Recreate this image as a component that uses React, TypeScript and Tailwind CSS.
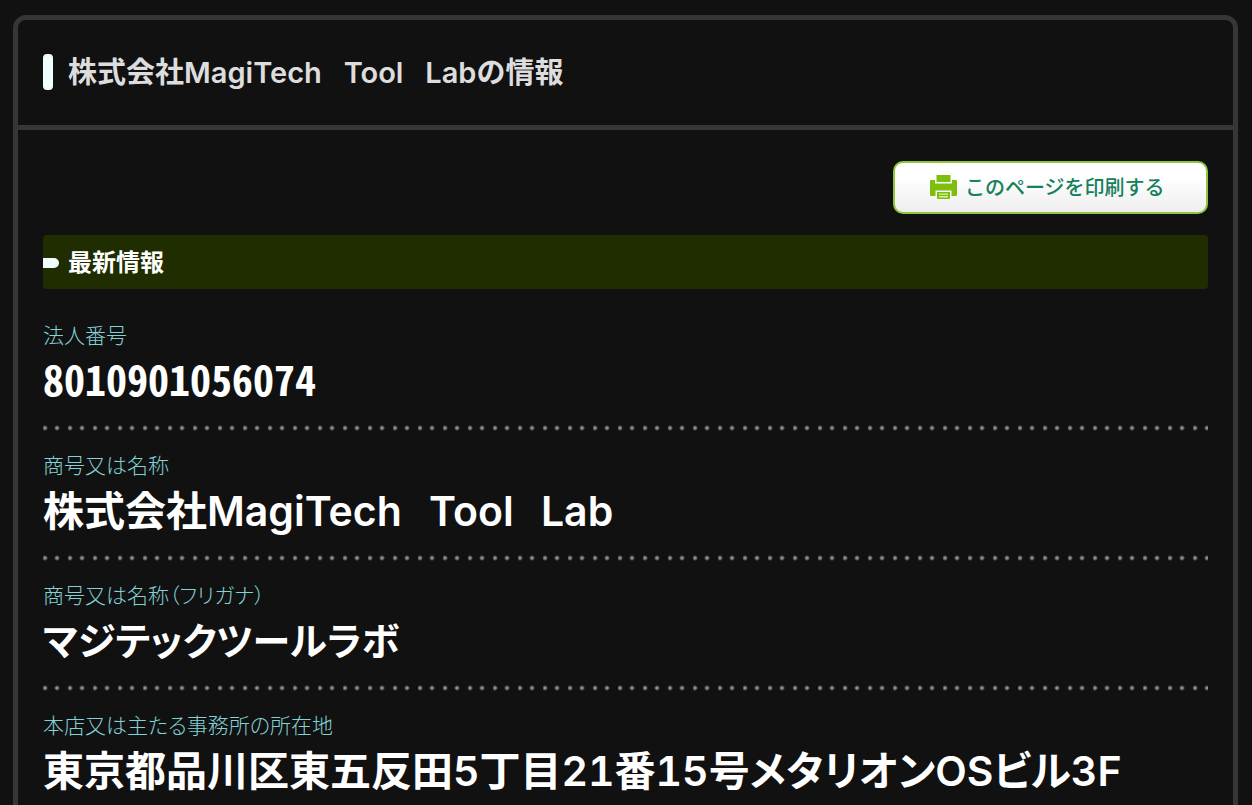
type Entry = {
  label: string;
  value: string;
  valueClass: string;
};

const entries: Entry[] = [
  {
    label: '法人番号',
    value: '8010901056074',
    valueClass:
      "text-[42px] leading-[60px] font-['Noto_Sans_CJK_JP',sans-serif] [font-feature-settings:'hwid']",
  },
  {
    label: '商号又は名称',
    value: '株式会社MagiTech\u2002\u2009Tool\u2002\u2009Lab',
    valueClass: 'text-[41px] leading-[66px]',
  },
  {
    label: '商号又は名称（フリガナ）',
    value: 'マジテックツールラボ',
    valueClass: "text-[38px] leading-[66px] [font-feature-settings:'palt']",
  },
  {
    label: '本店又は主たる事務所の所在地',
    value: '東京都品川区東五反田5丁目21番15号メタリオンOSビル3F',
    valueClass: "text-[41px] leading-[66px] [font-feature-settings:'palt','tnum']",
  },
];

const PrinterIcon = () => (
  <svg width="27" height="24" viewBox="0 0 27 24" aria-hidden="true" className="shrink-0">
    <rect x="6.500" y="0" width="14" height="7" fill="#7ebf0d" />
    <path
      d="M1 5h4v3.500h17V5h4a1 1 0 0 1 1 1v14a1 1 0 0 1-1 1h-4.500v-5.500h-16V21H1a1 1 0 0 1-1-1V6a1 1 0 0 1 1-1z"
      fill="#7ebf0d"
    />
    <path d="M7 17h13v6a1 1 0 0 1-1 1H8a1 1 0 0 1-1-1z" fill="#7ebf0d" />
    <path d="M9 18.500h9v1.300H9zM9 21h9v1.500H9z" fill="#d9efb4" />
  </svg>
);

const DottedLine = () => (
  <div
    role="separator"
    className="h-1.5 bg-[radial-gradient(circle_at_2px_3px,#999_0,#888_1px,transparent_3px),radial-gradient(circle_at_14px_3px,#999_0,#888_1px,transparent_3px)] bg-[length:25px_6px] bg-repeat-x"
  />
);

const InfoRow = ({ label, value, valueClass }: Entry) => (
  <div className="pb-[19px]">
    <dt className="text-[21px] leading-7 font-light text-[#83d2d6] font-['Noto_Sans_CJK_JP',sans-serif] [font-feature-settings:'palt']">
      {label}
    </dt>
    <dd className={`min-h-[77px] font-semibold text-white ${valueClass}`}>{value}</dd>
    <dd aria-hidden="true">
      <DottedLine />
    </dd>
  </div>
);

export default function App() {
  return (
    <div className="min-h-screen bg-[#111] py-[15px] pr-3.5 pl-[13px] font-[Inter,'Noto_Sans_CJK_JP',sans-serif]">
      <main className="rounded-[13px] border-[5px] border-[#363636]">
        <header className="flex h-[110px] items-center border-b-[5px] border-[#363636] px-[25px] pb-0.5">
          <span className="h-9 w-2.5 rounded bg-[#f0fffd]" />
          <h1 className="ml-[15px] pt-0.5 text-[29px] leading-9 font-semibold text-[#ddd]">
            株式会社MagiTech{'\u2002 '}Tool{'\u2002 '}Labの情報
          </h1>
        </header>

        <div className="px-[25px] pt-[31px]">
          <div className="flex justify-end">
            <button
              type="button"
              className="flex h-[53px] w-[315px] cursor-pointer items-center gap-2 rounded-[10px] border-2 border-[#8fc63d] bg-linear-to-b from-white from-30% to-[#eee] pb-0.5 pl-[35px] text-[20px] font-medium text-[#15805c]"
            >
              <PrinterIcon />
              <span className="pt-0.5">このページを印刷する</span>
            </button>
          </div>

          <h2 className="mt-[21px] flex h-[54px] items-center gap-[9px] rounded bg-[#1f2d00] pt-0.5 text-[24px] leading-8 font-bold text-white">
            <span className="h-2.5 w-4 rounded-r-[5px] bg-[#f0fffd]" />
            最新情報
          </h2>

          <dl className="mt-[31px]">
            {entries.map((entry) => (
              <InfoRow key={entry.label} {...entry} />
            ))}
          </dl>
        </div>
      </main>
    </div>
  );
}
